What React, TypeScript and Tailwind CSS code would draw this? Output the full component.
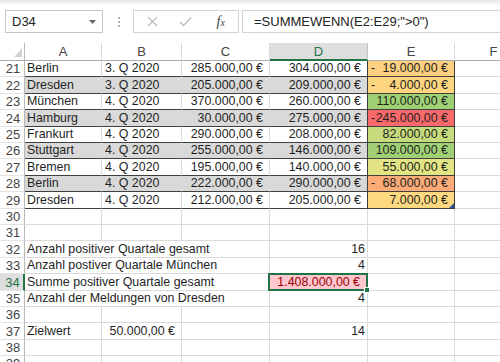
import React from 'react';

const H: Record<number, string> = {
  21: 'h-[16px]', 22: 'h-[17px]', 23: 'h-[16px]', 24: 'h-[17px]', 25: 'h-[16px]', 26: 'h-[16px]',
  27: 'h-[17px]', 28: 'h-[16px]', 29: 'h-[17px]', 30: 'h-[16px]', 31: 'h-[16px]', 32: 'h-[17px]',
  33: 'h-[16px]', 34: 'h-[17px]', 35: 'h-[16px]', 36: 'h-[16px]', 37: 'h-[17px]', 38: 'h-[16px]', 39: 'h-[16px]',
};

type TRow = { n: number; a: string; b: string; c: string; d: string; neg: boolean; e: string; fill: string };

const table: TRow[] = [
  { n: 21, a: 'Berlin', b: '3. Q 2020', c: '285.000,00 €', d: '304.000,00 €', neg: true, e: '19.000,00 €', fill: 'bg-[#fdd07f]' },
  { n: 22, a: 'Dresden', b: '3. Q 2020', c: '205.000,00 €', d: '209.000,00 €', neg: true, e: '4.000,00 €', fill: 'bg-[#fed680]' },
  { n: 23, a: 'München', b: '4. Q 2020', c: '370.000,00 €', d: '260.000,00 €', neg: false, e: '110.000,00 €', fill: 'bg-[#9ecf73]' },
  { n: 24, a: 'Hamburg', b: '4. Q 2020', c: '30.000,00 €', d: '275.000,00 €', neg: true, e: '245.000,00 €', fill: 'bg-[#f8696b]' },
  { n: 25, a: 'Frankurt', b: '4. Q 2020', c: '290.000,00 €', d: '208.000,00 €', neg: false, e: '82.000,00 €', fill: 'bg-[#c6db7b]' },
  { n: 26, a: 'Stuttgart', b: '4. Q 2020', c: '255.000,00 €', d: '146.000,00 €', neg: false, e: '109.000,00 €', fill: 'bg-[#a0cf74]' },
  { n: 27, a: 'Bremen', b: '4. Q 2020', c: '195.000,00 €', d: '140.000,00 €', neg: false, e: '55.000,00 €', fill: 'bg-[#e2e383]' },
  { n: 28, a: 'Berlin', b: '4. Q 2020', c: '222.000,00 €', d: '290.000,00 €', neg: true, e: '68.000,00 €', fill: 'bg-[#fbab77]' },
  { n: 29, a: 'Dresden', b: '4. Q 2020', c: '212.000,00 €', d: '205.000,00 €', neg: false, e: '7.000,00 €', fill: 'bg-[#ffd980]' },
];

function RowHead({ n, sel = false }: { n: number; sel?: boolean }) {
  return (
    <div
      className={`w-[25px] shrink-0 flex items-center justify-center pl-[2px] text-[13px] border-b border-b-[#e3e3e3] ${
        sel ? 'bg-[#dedede] text-[#217346] border-r-2 border-r-[#217346]' : 'text-[#444444] border-r border-r-[#b9b9b9]'
      }`}
    >
      {n}
    </div>
  );
}

const grid = 'border-r border-r-[#dadada] border-b border-b-[#dadada]';

function EmptyRow({ n }: { n: number }) {
  return (
    <div className={`flex ${H[n]}`}>
      <RowHead n={n} />
      <div className={`w-[77px] shrink-0 ${grid}`} />
      <div className={`w-[80px] shrink-0 ${grid}`} />
      <div className={`w-[88px] shrink-0 ${grid}`} />
      <div className={`w-[98px] shrink-0 ${grid}`} />
      <div className={`w-[87px] shrink-0 ${grid}`} />
      <div className={`w-[78px] shrink-0 ${grid}`} />
    </div>
  );
}

function LabelRow({ n, label, value, selected = false }: { n: number; label: string; value: string; selected?: boolean }) {
  return (
    <div className={`flex ${H[n]}`}>
      <RowHead n={n} sel={selected} />
      <div className={`w-[245px] shrink-0 flex items-center pl-[2px] whitespace-nowrap ${grid}`}>{label}</div>
      {selected ? (
        <div className="w-[98px] shrink-0 relative flex items-center justify-end pr-[7px] bg-[#ffc7ce] text-[#9c0006] border-r border-r-[#dadada] border-b border-b-[#dadada]">
          {value}
          <div className="absolute -left-[2px] -right-[1px] -top-[1px] -bottom-[1px] border-2 border-[#217346]" />
          <div className="absolute -right-[3px] -bottom-[3px] w-[6px] h-[6px] bg-[#217346] border border-white" />
        </div>
      ) : (
        <div className={`w-[98px] shrink-0 flex items-center justify-end pr-[2px] ${grid}`}>{value}</div>
      )}
      <div className={`w-[87px] shrink-0 ${grid}`} />
      <div className={`w-[78px] shrink-0 ${grid}`} />
    </div>
  );
}

function TableRow({ r, i }: { r: TRow; i: number }) {
  const bg = i % 2 === 1 ? 'bg-[#d9d9d9]' : '';
  const base = `shrink-0 flex items-center whitespace-nowrap border-b border-b-[#3f3f3f] ${bg}`;
  return (
    <div className={`flex ${H[r.n]}`}>
      <RowHead n={r.n} />
      <div className={`w-[77px] pl-[2px] border-r border-r-[#dadada] ${base}`}>{r.a}</div>
      <div className={`w-[80px] pl-[3px] border-r border-r-[#dadada] ${base}`}>{r.b}</div>
      <div className={`w-[88px] justify-end pr-[6px] border-r border-r-[#dadada] ${base}`}>{r.c}</div>
      <div className={`w-[98px] justify-end pr-[6px] border-r border-r-[#3f3f3f] ${base}`}>{r.d}</div>
      <div
        className={`w-[87px] shrink-0 relative flex items-center justify-between whitespace-nowrap pl-[3px] pr-[6px] border-r border-r-[#3f3f3f] border-b border-b-[#3f3f3f] ${r.fill}`}
      >
        <span>{r.neg ? '-' : ''}</span>
        <span>{r.e}</span>
        {r.n === 29 && (
          <svg className="absolute right-0 bottom-0" width="5" height="5" viewBox="0 0 5 5">
            <polygon points="5,0 5,5 0,5" fill="#2f5597" />
          </svg>
        )}
      </div>
      <div className={`w-[78px] shrink-0 ${grid}`} />
    </div>
  );
}

export default function App() {
  return (
    <div className="w-[500px] h-[362px] overflow-hidden bg-white text-[#1f1f1f] font-['Liberation_Sans',Arial,sans-serif] text-[12.4px] leading-none">
      {/* Toolbar */}
      <div className="h-[43px] bg-white">
        <div className="h-[6px] bg-gradient-to-b from-[#e6e6e6] to-white" />
        <div className="mt-[4px] h-[23px] flex items-stretch">
          <div className="ml-[5px] w-[98px] border border-[#c6c6c6] flex items-center justify-between pl-[6px] pr-[6px] text-[13px] text-[#222]">
            <span>D34</span>
            <svg width="7" height="4" viewBox="0 0 7 4">
              <polygon points="0,0 7,0 3.5,4" fill="#666" />
            </svg>
          </div>
          <div className="ml-[14px] w-[3px] flex flex-col items-center justify-center gap-[2px]">
            <div className="w-[2px] h-[2px] bg-[#b5b5b5]" />
            <div className="w-[2px] h-[2px] bg-[#b5b5b5]" />
            <div className="w-[2px] h-[2px] bg-[#b5b5b5]" />
          </div>
          <div className="ml-[13px] w-[106px] border border-[#d4d4d4] grid grid-cols-3 items-center">
            <div className="flex justify-center pl-[2px]">
              <svg width="11" height="11" viewBox="0 0 11 11">
                <path d="M1 1 L10 10 M10 1 L1 10" stroke="#bdbdbd" strokeWidth="1.3" />
              </svg>
            </div>
            <div className="flex justify-center">
              <svg width="13" height="11" viewBox="0 0 13 11">
                <path d="M1 6 L4.5 9.5 L12 1.5" stroke="#bdbdbd" strokeWidth="1.5" fill="none" />
              </svg>
            </div>
            <div className="flex justify-center items-center font-['Liberation_Serif',serif] italic text-[#444] text-[14px]">
              <span>f</span>
              <span className="text-[10px] mt-[3px]">x</span>
            </div>
          </div>
          <div className="ml-[3px] flex-1 border border-[#d4d4d4] border-r-0 flex items-center pl-[11px] text-[13px] text-[#222] whitespace-nowrap">
            =SUMMEWENN(E2:E29;"&gt;0")
          </div>
        </div>
      </div>

      {/* Column headers */}
      <div className="flex h-[18px] text-[13px] text-[#444444]">
        <div className="w-[25px] shrink-0 relative border-r border-r-[#b9b9b9] border-b border-b-[#ababab]">
          <svg className="absolute left-[14px] top-[5px]" width="8" height="9" viewBox="0 0 8 9">
            <polygon points="8,0 8,9 0,9" fill="#d3d3d3" />
          </svg>
        </div>
        <div className="w-[77px] shrink-0 flex items-center justify-center border-r border-r-[#dadada] border-b border-b-[#ababab]">A</div>
        <div className="w-[80px] shrink-0 flex items-center justify-center border-r border-r-[#dadada] border-b border-b-[#ababab]">B</div>
        <div className="w-[88px] shrink-0 flex items-center justify-center border-r border-r-[#dadada] border-b border-b-[#ababab]">C</div>
        <div className="w-[98px] shrink-0 flex items-center justify-center bg-[#dedede] text-[#217346] border-r border-r-[#c6c6c6] border-b-2 border-b-[#217346]">D</div>
        <div className="w-[87px] shrink-0 flex items-center justify-center border-r border-r-[#dadada] border-b border-b-[#ababab]">E</div>
        <div className="w-[78px] shrink-0 flex items-center justify-center border-r border-r-[#dadada] border-b border-b-[#ababab]">F</div>
      </div>

      {/* Table rows */}
      {table.map((r, i) => (
        <TableRow key={r.n} r={r} i={i} />
      ))}

      <EmptyRow n={30} />
      <EmptyRow n={31} />
      <LabelRow n={32} label="Anzahl positiver Quartale gesamt" value="16" />
      <LabelRow n={33} label="Anzahl postiver Quartale München" value="4" />
      <LabelRow n={34} label="Summe positiver Quartale gesamt" value="1.408.000,00 €" selected />
      <LabelRow n={35} label="Anzahl der Meldungen von Dresden" value="4" />
      <EmptyRow n={36} />
      <div className={`flex ${H[37]}`}>
        <RowHead n={37} />
        <div className={`w-[77px] shrink-0 flex items-center pl-[2px] ${grid}`}>Zielwert</div>
        <div className={`w-[80px] shrink-0 flex items-center justify-end pr-[6px] whitespace-nowrap ${grid}`}>50.000,00 €</div>
        <div className={`w-[88px] shrink-0 ${grid}`} />
        <div className={`w-[98px] shrink-0 flex items-center justify-end pr-[2px] ${grid}`}>14</div>
        <div className={`w-[87px] shrink-0 ${grid}`} />
        <div className={`w-[78px] shrink-0 ${grid}`} />
      </div>
      <EmptyRow n={38} />
      <EmptyRow n={39} />
    </div>
  );
}
